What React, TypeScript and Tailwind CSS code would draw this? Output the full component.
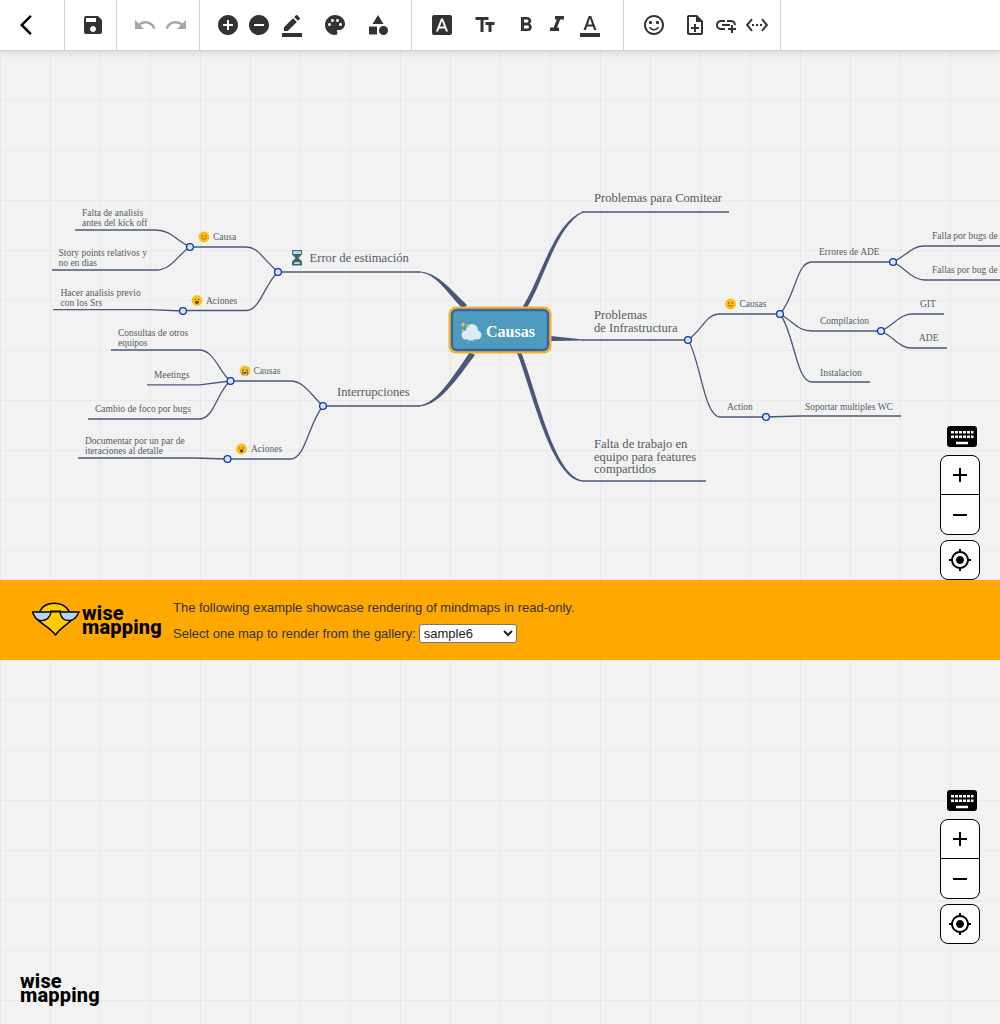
import React from 'react'
import {
  MdAdd,
  MdAddCircle,
  MdAddLink,
  MdArrowBackIosNew,
  MdCategory,
  MdFontDownload,
  MdFormatBold,
  MdMyLocation,
  MdOutlineNoteAdd,
  MdPalette,
  MdRedo,
  MdRemove,
  MdRemoveCircle,
  MdSave,
  MdSentimentSatisfiedAlt,
  MdSettingsEthernet,
  MdTextFields,
  MdUndo,
} from 'react-icons/md'

const LINE = '#495879'

const Face: React.FC<{ x: number; y: number; mouth?: 'smile' | 'open' | 'cry' }> = ({ x, y, mouth = 'smile' }) => (
  <g transform={`translate(${x} ${y})`}>
    <circle r="5.4" fill="#fbbf16" />
    <circle cx="-1.8" cy="-1" r="0.7" fill="#6b4a10" />
    <circle cx="1.8" cy="-1" r="0.7" fill="#6b4a10" />
    {mouth == 'smile' && <path d="M-2.4 1.2Q0 3.4 2.4 1.2" fill="none" stroke="#6b4a10" strokeWidth="0.7" />}
    {mouth == 'open' && <ellipse cy="1.8" rx="1.8" ry="1.5" fill="#5b3410" />}
    {mouth == 'cry' && (
      <>
        <rect x="-3" y="-1" width="1.4" height="5" fill="#5f87b5" />
        <rect x="1.6" y="-1" width="1.4" height="5" fill="#5f87b5" />
        <rect x="-1.2" y="1" width="2.4" height="1.5" fill="#5b3410" />
      </>
    )}
  </g>
)

const Label: React.FC<{ x: number; y: number; size?: number; children: React.ReactNode }> = ({ x, y, size = 9.5, children }) => (
  <text x={x} y={y} fontSize={size} fill="#525c61" fontFamily="'Liberation Serif', serif">
    {children}
  </text>
)

const links = [
  // error de estimacion
  'M278 272H420',
  'M278 272C262 258 258 247 246 247H190',
  'M278 272C264 285 260 310.5 246 310.5H183',
  'M190 247C176 240 170 230 156 230H75',
  'M190 247C178 254 172 270 156 270H52',
  'M183 311L150 309.7H53',
  // interrupciones
  'M323 406H420',
  'M323 406C310 394 304 381 290 381H230',
  'M323 406C308 424 306 459 290 459H227',
  'M230 381C218 370 214 350 199 350H111',
  'M230 381L200 384.8H147',
  'M230 381C216 394 214 419 199 419H88',
  'M227.5 459L194 458H78',
  // derecha
  'M582 212H729',
  'M582 340H688',
  'M582 481H706',
  'M688 340C704 328 706 314 720 314H780',
  'M688 340C700 358 704 417 720 417H766',
  'M766 417L800 416H901',
  'M780 314C796 296 796 262 812 262H893',
  'M780 314C794 322 798 331 812 331H881',
  'M780 314C794 332 796 382 812 382H870',
  'M893 262C906 256 912 246 924 246H1000',
  'M893 262C906 268 912 280 925 280H1000',
  'M881 331C894 325 900 314 912 314H944',
  'M881 331C894 337 900 348 911 348H947',
]

const dots = [
  [278, 272],
  [190, 247],
  [183, 311],
  [323, 406],
  [230.5, 381],
  [227.5, 459],
  [688, 340],
  [780, 314],
  [766, 417],
  [893, 262],
  [881, 331],
]

const MindMap: React.FC = () => (
  <svg width="1000" height="530" viewBox="0 50 1000 530" className="block">
    {/* ramas gruesas que salen del nodo central */}
    <g fill={LINE}>
      <path d="M523 306C541 278 554 222 583 211.4V212.6C556 226 544 281 526.5 308.5Z" />
      <path d="M517 353C532 390 551 480 583 481.6V480.4C554 477 536 389 521 352Z" />
      <path d="M551 336L583 339.5V340.5L551 341Z" />
      <path d="M419 271.4C436 272 448 286 467 305L463 309C446 292 436 273 419 272.6Z" />
      <path d="M419 405.4C436 404 452 378 470 352L475 355C456 380 440 405 419 406.6Z" />
    </g>
    <g fill="none" stroke={LINE} strokeWidth="1.3">
      {links.map((d) => (
        <path key={d} d={d} />
      ))}
    </g>
    {dots.map(([cx, cy]) => (
      <circle key={`${cx}-${cy}`} cx={cx} cy={cy} r="3.4" fill="#e0e5ef" stroke="#023bb9" strokeWidth="1.3" />
    ))}

    <rect x="450" y="308" width="100" height="44" rx="6" fill="#4f9bbf" stroke="#f9ac2c" strokeWidth="3" />
    <rect x="452" y="310" width="96" height="40" rx="5" fill="#4f9bbf" stroke="#2f68a8" strokeWidth="2.4" />
    <g fill="#dcecf7">
      <circle cx="466" cy="335" r="4.5" />
      <circle cx="472" cy="330" r="6" />
      <circle cx="477" cy="335" r="4.5" />
      <circle cx="471" cy="336" r="4.5" />
    </g>
    <path d="M470 340l-2 3M475 339l-2 3" stroke="#a9cde3" strokeWidth="0.8" />
    <path d="M463 322l.9 1.8 1.8.9-1.8.9-.9 1.8-.9-1.8-1.8-.9 1.8-.9zM468 324l.8 1.4 1.4.8-1.4.8-.8 1.4-.8-1.4-1.4-.8 1.4-.8zM463 329l.7 1.2 1.2.7-1.2.7-.7 1.2-.7-1.2-1.2-.7 1.2-.7z" fill="#efc93f" />
    <text x="486" y="337" fontSize="16" fontWeight="700" fill="#ffffff" fontFamily="'Liberation Serif', serif">
      Causas
    </text>

    <path d="M292 250h10v4.500l-3.500 3.500 3.500 3.500v4h-10v-4l3.500-3.500-3.500-3.500z" fill="#3f6670" />
    <path d="M293 251h8v3h-8zM295 262h4l1.500 2h-7z" fill="#a6dde2" />
    <Label x={309.5} y={262} size={12.6}>Error de estimación</Label>
    <Label x={337} y={396} size={12.6}>Interrupciones</Label>
    <Label x={594} y={202} size={12.6}>Problemas para Comitear</Label>
    <Label x={594} y={319} size={12.6}>Problemas</Label>
    <Label x={594} y={332} size={12.6}>de Infrastructura</Label>
    <Label x={594} y={448} size={12.6}>Falta de trabajo en</Label>
    <Label x={594} y={461} size={12.6}>equipo para features</Label>
    <Label x={594} y={473} size={12.6}>compartidos</Label>

    <Face x={204} y={237} />
    <Label x={213} y={240}>Causa</Label>
    <Face x={197} y={300.5} mouth="open" />
    <Label x={206} y={304}>Aciones</Label>
    <Face x={245} y={371} mouth="cry" />
    <Label x={253.5} y={374}>Causas</Label>
    <Face x={241.5} y={449} mouth="open" />
    <Label x={251} y={452}>Aciones</Label>
    <Face x={730.5} y={304} />
    <Label x={739.5} y={307}>Causas</Label>

    <Label x={82} y={216}>Falta de analisis</Label>
    <Label x={82} y={226}>antes del kick off</Label>
    <Label x={58.5} y={256}>Story points relativos y</Label>
    <Label x={58.5} y={266}>no en dias</Label>
    <Label x={60.5} y={296}>Hacer analisis previo</Label>
    <Label x={60.5} y={306}>con los Srs</Label>
    <Label x={118} y={336}>Consultas de otros</Label>
    <Label x={118} y={346}>equipos</Label>
    <Label x={154} y={378}>Meetings</Label>
    <Label x={95} y={412}>Cambio de foco por bugs</Label>
    <Label x={85} y={444}>Documentar por un par de</Label>
    <Label x={85} y={454}>iteraciones al detalle</Label>

    <Label x={819} y={255}>Errores de ADE</Label>
    <Label x={820} y={324}>Compilacion</Label>
    <Label x={820} y={376}>Instalacion</Label>
    <Label x={727} y={410}>Action</Label>
    <Label x={805} y={410}>Soportar multiples WC</Label>
    <Label x={932} y={239}>Falla por bugs de ADE</Label>
    <Label x={932} y={273}>Fallas por bug de ADE</Label>
    <Label x={920} y={307}>GIT</Label>
    <Label x={919} y={341}>ADE</Label>
  </svg>
)

const KeyboardIcon: React.FC = () => (
  <svg width="30" height="21" viewBox="0 0 30 21" className="block">
    <rect width="30" height="21" rx="3" fill="#000000" />
    <path
      d="M4 5h3v2.500H4zM8 5h3v2.500H8zM12 5h3v2.500h-3zM16 5h3v2.500h-3zM20 5h3v2.500h-3zM24 5h2.500v2.500H24zM4 9.500h3V12H4zM8 9.500h3V12H8zM12 9.500h3V12h-3zM16 9.500h3V12h-3zM20 9.500h3V12h-3zM24 9.500h2.500V12H24zM9 15.700h12v2.600H9z"
      fill="#ffffff"
    />
  </svg>
)

const ZoomControls: React.FC<{ className: string }> = ({ className }) => (
  <div className={`absolute right-5 flex flex-col w-10 ${className}`}>
    <div className="mb-2 ml-[7px]">
      <KeyboardIcon />
    </div>
    <div className="w-10 h-20 rounded-lg border border-black bg-white flex flex-col">
      <button className="h-[39px] flex items-center justify-center border-b border-black">
        <MdAdd className="text-[24px] text-black" />
      </button>
      <button className="flex-1 flex items-center justify-center">
        <MdRemove className="text-[24px] text-black" />
      </button>
    </div>
    <button className="w-10 h-10 mt-[5px] rounded-lg border border-black bg-white flex items-center justify-center">
      <MdMyLocation className="text-[24px] text-black" />
    </button>
  </div>
)

const Logo: React.FC = () => (
  <svg width="48" height="36" viewBox="0 0 48 36" className="block shrink-0">
    <path d="M8 9C10 4 16 1.200 22 1.200C29 1.200 34 4 37 9L42 16C36 22 28 26 23.500 33C19 26 9 22 4 16Z" fill="#ffcc00" stroke="#000" strokeWidth="1.500" strokeLinejoin="round" />
    <path d="M0.500 10H19C18 17 12 19 8 18.500C4 18 2 14 0.500 10Z" fill="#b5d4f7" stroke="#000" strokeWidth="1.400" />
    <path d="M28 10H47C45 14 43 18 38 18.500C33 19 29 17 28 10Z" fill="#b5d4f7" stroke="#000" strokeWidth="1.400" />
    <path d="M18 9.500H29" stroke="#000" strokeWidth="2" />
  </svg>
)

const Wordmark: React.FC = () => (
  <div className="font-['Roboto',sans-serif] font-extrabold text-black text-[20px] leading-[14px] tracking-[0.2px]">
    <div>wise</div>
    <div>mapping</div>
  </div>
)

const tbIcon = 'text-[24px] text-[#333333]'
const tbBtn = 'w-6 h-6 flex items-center justify-center shrink-0'

const Toolbar: React.FC = () => (
  <div className="relative z-10 h-[50px] bg-white flex shadow-[0_1px_8px_rgba(0,0,0,0.18)]">
    <div className="w-[65px] border-r border-[#d0d0d0] pl-[14px] flex items-center">
      <button className={tbBtn}>
        <MdArrowBackIosNew className="text-[24px] text-black" />
      </button>
    </div>
    <div className="w-[52px] border-r border-[#d0d0d0] pl-4 flex items-center">
      <button className={tbBtn}>
        <MdSave className={tbIcon} />
      </button>
    </div>
    <div className="w-[83px] border-r border-[#d0d0d0] pl-4 flex items-center gap-[7px]">
      <button className={tbBtn}>
        <MdUndo className="text-[24px] text-[#a6a6a6]" />
      </button>
      <button className={tbBtn}>
        <MdRedo className="text-[24px] text-[#a6a6a6]" />
      </button>
    </div>
    <div className="w-[212px] border-r border-[#d0d0d0] pl-4 flex items-center">
      <button className={tbBtn}>
        <MdAddCircle className={tbIcon} />
      </button>
      <button className={`${tbBtn} ml-[7px]`}>
        <MdRemoveCircle className={tbIcon} />
      </button>
      <button className={`${tbBtn} ml-[9px]`}>
        <svg width="24" height="24" viewBox="0 0 24 24" fill="#333333">
          <path d="M22 24H2v-4h20v4zM13.060 5.190l3.750 3.750L7.750 18H4v-3.750l9.060-9.060zm4.820 2.680-3.750-3.750 1.830-1.830c.39-.39 1.020-.39 1.410 0l2.340 2.340c.39.39.39 1.020 0 1.410l-1.830 1.830z" />
        </svg>
      </button>
      <button className={`${tbBtn} ml-[19px]`}>
        <MdPalette className={tbIcon} />
      </button>
      <button className={`${tbBtn} ml-[19px]`}>
        <MdCategory className={tbIcon} />
      </button>
    </div>
    <div className="w-[212px] border-r border-[#d0d0d0] pl-[18px] flex items-center">
      <button className={tbBtn}>
        <MdFontDownload className={tbIcon} />
      </button>
      <button className={`${tbBtn} ml-[19px]`}>
        <MdTextFields className={tbIcon} />
      </button>
      <button className={`${tbBtn} ml-[17px]`}>
        <MdFormatBold className={tbIcon} />
      </button>
      <button className={`${tbBtn} ml-[7px]`}>
        <svg width="24" height="24" viewBox="0 0 24 24" fill="#333333">
          <path d="M10 3v3.500h1.800L8.600 14.500H5V18h9v-3.500h-2L15.200 6.500H19V3z" />
        </svg>
      </button>
      <button className={`${tbBtn} ml-[9px]`}>
        <svg width="24" height="24" viewBox="0 0 24 24" fill="#333333">
          <path d="M2 20h20v4H2v-4zm3.490-3h2.420l1.270-3.580h5.650L16.090 17h2.420L13.250 3h-2.500L5.490 17zm4.420-5.610 2.030-5.790h.12l2.030 5.790H9.910z" />
        </svg>
      </button>
    </div>
    <div className="w-[157px] border-r border-[#d0d0d0] pl-[18px] flex items-center">
      <button className={tbBtn}>
        <MdSentimentSatisfiedAlt className={tbIcon} />
      </button>
      <button className={`${tbBtn} ml-[17px]`}>
        <MdOutlineNoteAdd className={tbIcon} />
      </button>
      <button className={`${tbBtn} ml-[7px]`}>
        <MdAddLink className={tbIcon} />
      </button>
      <button className={`${tbBtn} ml-[7px]`}>
        <MdSettingsEthernet className={tbIcon} />
      </button>
    </div>
  </div>
)

const App: React.FC = () => {
  return (
    <div className="relative h-screen w-full overflow-hidden flex flex-col bg-[#f2f2f2] bg-[linear-gradient(#e9e9e9_1px,transparent_1px),linear-gradient(90deg,#e9e9e9_1px,transparent_1px)] bg-[size:50px_50px] font-['Liberation_Sans',sans-serif]">
      <Toolbar />
      <div className="relative h-[530px] shrink-0">
        <MindMap />
        <ZoomControls className="bottom-0" />
      </div>
      <div className="h-20 shrink-0 bg-[#ffa800] flex items-center pl-8 text-[13px] text-[#333333]">
        <div className="flex items-center gap-[2px] w-[129px]">
          <Logo />
          <Wordmark />
        </div>
        <div className="ml-3 pt-[2px]">
          <p className="leading-[15px]">The following example showcase rendering of mindmaps in read-only.</p>
          <p className="mt-[9px] leading-[19px] flex items-center gap-[3px]">
            Select one map to render from the gallery:
            <select defaultValue="sample6" className="w-[98px] h-[19px] bg-white border border-[#767676] rounded-[3px] text-[13px] text-[#222222]">
              <option value="sample6">sample6</option>
              <option value="sample5">sample5</option>
            </select>
          </p>
        </div>
      </div>
      <div className="relative flex-1">
        <ZoomControls className="bottom-[80px]" />
        <div className="absolute left-5 bottom-[22px]">
          <Wordmark />
        </div>
      </div>
    </div>
  )
}

export default App
